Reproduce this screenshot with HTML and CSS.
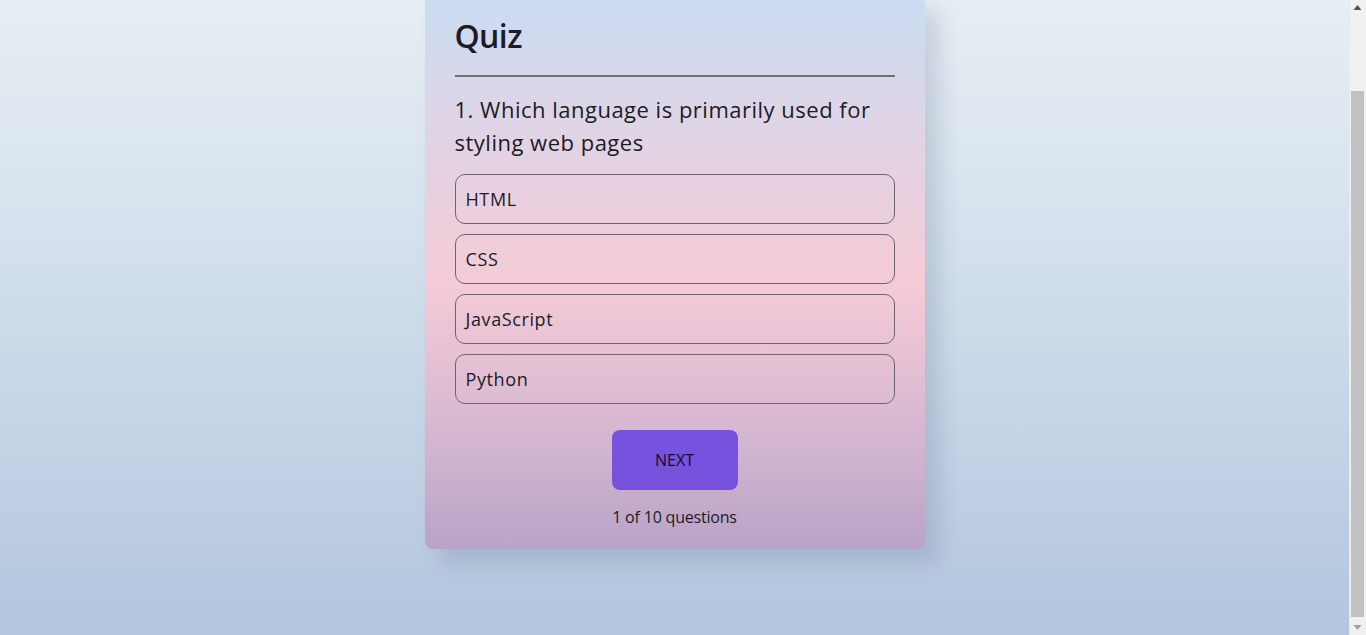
FILE: index.html
```html
<!DOCTYPE html>
<html lang="en">
<head>
<meta charset="utf-8">
<title>Quiz</title>
<link rel="stylesheet" href="styles.css">
</head>
<body>
  <div class="app">
    <h1 class="title">Quiz</h1>
    <div class="quiz">
      <h2 class="question">1. Which language is primarily used for styling web pages</h2>
      <div class="answers">
        <button class="answer">HTML</button>
        <button class="answer">CSS</button>
        <button class="answer">JavaScript</button>
        <button class="answer">Python</button>
      </div>
      <div class="actions">
        <button class="next">NEXT</button>
      </div>
      <p class="progress">1 of 10 questions</p>
    </div>
  </div>
  <div class="scrollbar" aria-hidden="true">
    <svg class="arrow arrow-up" width="17" height="17" viewBox="0 0 17 17"><polygon points="4.5,10 12.5,10 8.5,5" fill="#505050"/></svg>
    <div class="track"><div class="thumb"></div></div>
    <svg class="arrow arrow-down" width="17" height="17" viewBox="0 0 17 17"><polygon points="4.5,7 12.5,7 8.5,12" fill="#a3a3a3"/></svg>
  </div>
  <script src="script.js"></script>
</body>
</html>
```
FILE: styles.css
```css
html {
  background: linear-gradient(180deg, #e8eef4 0%, #d3e0ec 40%, #b3c6df 100%) fixed;
}
body {
  margin: 0;
  padding: 85px 17px 86px 0;
  font-family: "Open Sans", "Liberation Sans", sans-serif;
  color: #1d1b26;
}
.app {
  box-sizing: border-box;
  width: 500px;
  margin: 0 auto;
  padding: 21px 30px 20px;
  border-radius: 8px;
  background: linear-gradient(180deg, #c9dcf3 0%, #e0d4e4 25%, #f5cbd6 52%, #d7b8d1 78%, #b9a3c8 100%);
  box-shadow: 14px 14px 22px rgba(60, 80, 110, 0.18);
}
.title {
  margin: 0;
  font-size: 32px;
  line-height: 40px;
  font-weight: 600;
  letter-spacing: -0.6px;
  padding-bottom: 19px;
  border-bottom: 2px solid #6f6f78;
}
.question {
  margin: 16px 0 15px;
  font-size: 22px;
  line-height: 33px;
  font-weight: 400;
  letter-spacing: 0.5px;
}
.answers {
  display: flex;
  flex-direction: column;
  gap: 10px;
}
.answer {
  box-sizing: border-box;
  height: 50px;
  width: 100%;
  padding: 0 10px;
  text-align: left;
  font-family: inherit;
  font-size: 18px;
  letter-spacing: 0.6px;
  color: #1d1b26;
  background: transparent;
  border: 1px solid #6c6570;
  border-radius: 10px;
}
.actions {
  display: flex;
  justify-content: center;
  margin-top: 26px;
}
.next {
  width: 126px;
  height: 60px;
  border: none;
  border-radius: 8px;
  background: #7752df;
  color: #130a2c;
  font-family: inherit;
  font-size: 16px;
}
.progress {
  margin: 15px 0 0;
  text-align: center;
  font-size: 16px;
  line-height: 24px;
  letter-spacing: -0.2px;
}
.scrollbar {
  position: fixed;
  top: 0;
  right: 0;
  bottom: 0;
  width: 17px;
  display: flex;
  flex-direction: column;
  background: #f1f1f1;
  border-left: 1px solid #e9e9e9;
  box-sizing: border-box;
}
.arrow {
  flex: none;
  display: block;
  margin-left: -1px;
}
.track {
  flex: 1;
  display: flex;
  flex-direction: column;
  justify-content: flex-end;
  padding: 0 2px 1px 1px;
}
.thumb {
  height: 526px;
  background: #c1c1c1;
}
```
FILE: script.js
```js
window.scrollTo(0, document.documentElement.scrollHeight);
```
